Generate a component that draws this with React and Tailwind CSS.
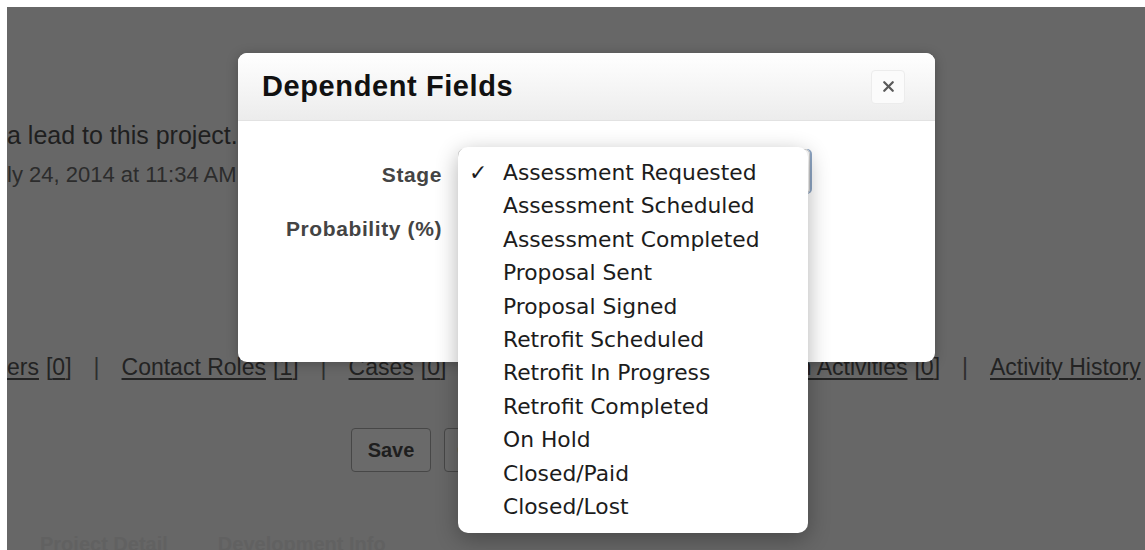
import { X } from 'lucide-react'

const stages = [
  'Assessment Requested',
  'Assessment Scheduled',
  'Assessment Completed',
  'Proposal Sent',
  'Proposal Signed',
  'Retrofit Scheduled',
  'Retrofit In Progress',
  'Retrofit Completed',
  'On Hold',
  'Closed/Paid',
  'Closed/Lost',
]

const related = [
  { label: 'ers', count: 0 },
  { label: 'Contact Roles', count: 1 },
  { label: 'Cases', count: 0 },
  { label: 'Related Contacts', count: 0 },
  { label: 'Open Activities', count: 0 },
  { label: 'Activity History' },
]

function RelatedLinks() {
  return (
    <div className="flex items-center text-[23px] leading-[26px] text-[#232323] whitespace-nowrap">
      {related.map((item, i) => (
        <div key={item.label} className="flex items-center">
          {i > 0 && <span className="mx-[22px] text-[#2e2e2e]">|</span>}
          <span className="underline underline-offset-[3px]">{item.label}</span>
          {item.count !== undefined && (
            <span className="ml-[7px] underline underline-offset-[3px]">[{item.count}]</span>
          )}
        </div>
      ))}
    </div>
  )
}

export default function App() {
  return (
    <div
      className="relative w-[1145px] h-[550px] overflow-hidden bg-white pt-[7px] pl-[7px]"
      style={{ fontFamily: '"Liberation Sans", Arial, sans-serif' }}
    >
      {/* dimmed record page behind the dialog */}
      <div className="h-full bg-[#676767] flex flex-col">
        <p className="mt-[114px] text-[25px] leading-[28px] text-[#1f1f1f] whitespace-nowrap">
          a lead to this project.
        </p>
        <p className="mt-[13px] text-[22px] leading-[26px] text-[#2c2c2c] whitespace-nowrap">
          ly 24, 2014 at 11:34 AM
        </p>

        <div className="mt-[166px]">
          <RelatedLinks />
        </div>

        <div className="mt-[48px] flex gap-[13px] pl-[344px]">
          <button className="h-[44px] w-[80px] rounded-[4px] border border-[#474747] bg-[#6a6a6a] text-[20px] font-bold text-[#1e1e1e]">
            Save
          </button>
          <button className="h-[44px] w-[92px] rounded-[4px] border border-[#474747] bg-[#6a6a6a] text-[20px] font-bold text-[#1e1e1e]">
            Cancel
          </button>
        </div>

        <div className="mt-[14px] h-[3px] bg-[#6f5b27]" />

        <div className="mt-[46px] flex gap-[50px] pl-[33px] text-[20px] leading-[24px] font-bold text-[#616161] whitespace-nowrap">
          <span>Project Detail</span>
          <span>Development Info</span>
        </div>
      </div>

      {/* dialog */}
      <div className="absolute left-[238px] top-[53px] w-[697px] h-[309px] rounded-[9px] bg-white shadow-[0_2px_12px_rgba(0,0,0,0.25)] overflow-hidden">
        <div className="h-[68px] flex items-center justify-between pl-[24px] pr-[30px] bg-gradient-to-b from-white to-[#ececec] border-b border-[#e2e2e2]">
          <h2 className="text-[29px] font-bold tracking-[0.6px] text-[#111]">Dependent Fields</h2>
          <button className="w-[34px] h-[34px] flex items-center justify-center rounded-[4px] border border-[#ececec] bg-[#fbfbfb] text-[#5a5a5a]">
            <X size={17} strokeWidth={3.2} />
          </button>
        </div>

        <div className="pt-[28px] flex flex-col gap-[12px] text-[21px] font-bold tracking-[0.6px] text-[#444]">
          <div className="flex items-center">
            <label className="w-[220px] pr-[16px] pt-[6px] text-right">Stage</label>
            <div className="w-[352px] h-[45px] rounded-[5px] border border-[#cfcfcf] shadow-[2px_0_0_#8ea6c4]" />
          </div>
          <div className="flex items-center">
            <label className="w-[220px] pr-[16px] text-right">Probability (%)</label>
            <div className="w-[200px] h-[45px]" />
          </div>
        </div>
      </div>

      {/* open stage picklist */}
      <ul
        className="absolute left-[458px] top-[147px] w-[350px] rounded-[10px] bg-white pt-[9px] pb-[10px] shadow-[0_6px_22px_rgba(0,0,0,0.3)] text-[21.8px] leading-[33.4px] text-[#1c1c1c]"
        style={{ fontFamily: '"DejaVu Sans", "Lucida Grande", sans-serif' }}
      >
        {stages.map((stage, i) => (
          <li key={stage} className="flex items-center whitespace-nowrap">
            <span className="w-[45px] pl-[11px] text-[22px] font-bold">{i === 0 ? '✓' : ''}</span>
            {stage}
          </li>
        ))}
      </ul>
    </div>
  )
}
